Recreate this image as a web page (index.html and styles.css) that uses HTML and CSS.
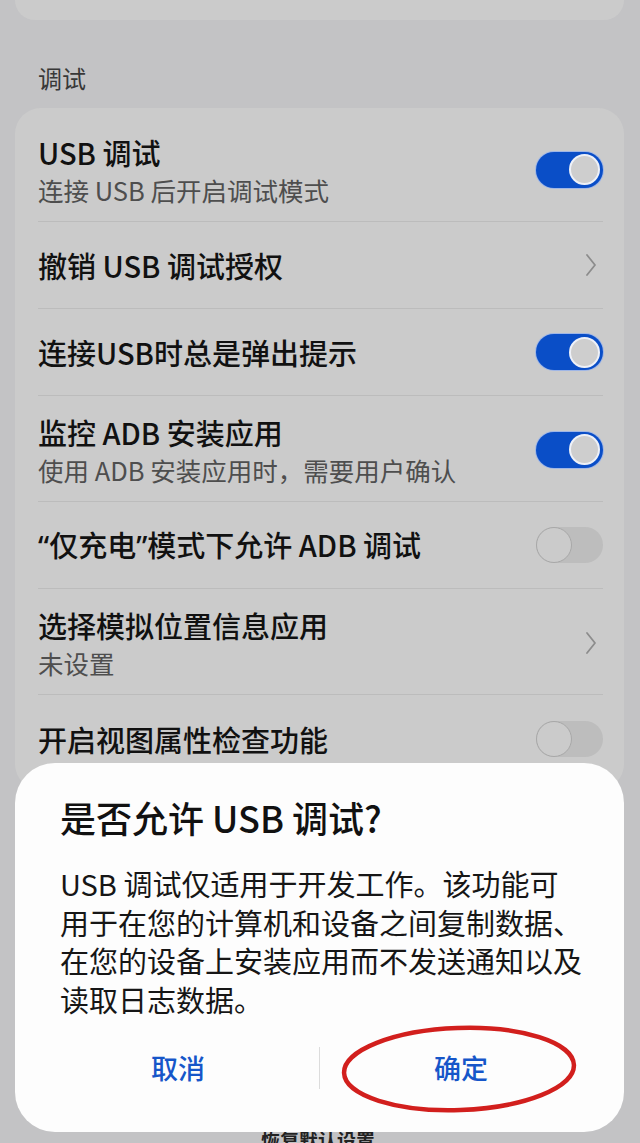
FILE: index.html
```html
<!DOCTYPE html>
<html lang="zh-CN">
<head>
<meta charset="utf-8">
<title>开发者选项</title>
<link rel="stylesheet" href="styles.css">
</head>
<body>
<div class="screen">
  <div class="card card-top"></div>
  <div class="section-label">调试</div>
  <div class="card list">
    <div class="row row-2">
      <div class="texts">
        <div class="title">USB 调试</div>
        <div class="sub">连接 USB 后开启调试模式</div>
      </div>
      <span class="toggle on"><span class="knob"></span></span>
    </div>
    <div class="row row-1">
      <div class="texts"><div class="title">撤销 USB 调试授权</div></div>
      <svg class="chev" viewBox="0 0 12 24" width="12" height="24"><polyline points="2,2 10,12 2,22" fill="none" stroke="#8c8c8c" stroke-width="1.8" stroke-linecap="round" stroke-linejoin="round"/></svg>
    </div>
    <div class="row row-1">
      <div class="texts"><div class="title">连接USB时总是弹出提示</div></div>
      <span class="toggle on"><span class="knob"></span></span>
    </div>
    <div class="row row-2">
      <div class="texts">
        <div class="title">监控 ADB 安装应用</div>
        <div class="sub">使用 ADB 安装应用时，需要用户确认</div>
      </div>
      <span class="toggle on"><span class="knob"></span></span>
    </div>
    <div class="row row-1">
      <div class="texts"><div class="title"><span class="q">“</span>仅充电<span class="q">”</span>模式下允许 ADB 调试</div></div>
      <span class="toggle off"><span class="knob"></span></span>
    </div>
    <div class="row row-2">
      <div class="texts">
        <div class="title">选择模拟位置信息应用</div>
        <div class="sub">未设置</div>
      </div>
      <svg class="chev" viewBox="0 0 12 24" width="12" height="24"><polyline points="2,2 10,12 2,22" fill="none" stroke="#8c8c8c" stroke-width="1.8" stroke-linecap="round" stroke-linejoin="round"/></svg>
    </div>
    <div class="row row-1 last">
      <div class="texts"><div class="title">开启视图属性检查功能</div></div>
      <span class="toggle off"><span class="knob"></span></span>
    </div>
  </div>
  <div class="bottom-link">恢复默认设置</div>

  <div class="sheet">
    <div class="sheet-title">是否允许 USB 调试?</div>
    <div class="sheet-body">USB 调试仅适用于开发工作。该功能可<br>用于在您的计算机和设备之间复制数据、<br>在您的设备上安装应用而不发送通知以及<br>读取日志数据。</div>
    <div class="actions">
      <div class="btn">取消</div>
      <div class="vline"></div>
      <div class="btn">确定</div>
    </div>
  </div>
  <svg class="mark" viewBox="0 0 240 94" width="240" height="94"><ellipse cx="120" cy="47" rx="115" ry="41" fill="none" stroke="#d21f1d" stroke-width="4.5"/></svg>
</div>
</body>
</html>
```
FILE: styles.css
```css
* { box-sizing: border-box; }
html, body { margin: 0; padding: 0; }
body {
  background: #c3c3c5;
  font-family: "Noto Sans CJK SC", "Noto Sans", sans-serif;
  color: #121212;
}
.screen {
  position: relative;
  width: 640px;
  height: 1143px;
  overflow: hidden;
  background: #c3c3c5;
}
.card {
  background: #cbcbcb;
  margin: 0 16px 0 15px;
}
.card-top {
  height: 20px;
  border-radius: 0 0 26px 26px;
}
.section-label {
  margin: 43px 0 15px;
  padding: 0 38px;
  font-size: 24px;
  line-height: 30px;
  color: #383838;
}
.list {
  border-radius: 26px;
  padding: 8px 21px 8px 23px;
}
.row {
  display: flex;
  align-items: center;
  justify-content: space-between;
  border-bottom: 1px solid #bcbcbc;
}
.row.last { border-bottom: none; }
.row-1 { height: 87px; }
.row-2 { height: 106px; padding-top: 2px; }
.texts { display: flex; flex-direction: column; }
.title {
  font-size: 29px;
  line-height: 36px;
  font-weight: 500;
  color: #111;
  white-space: nowrap;
}
.q { font-family: "Noto Sans", "Liberation Sans", sans-serif; }
.sub {
  font-size: 25.5px;
  line-height: 32px;
  margin-top: 4px;
  color: #4e4e4e;
  white-space: nowrap;
}
.toggle {
  position: relative;
  width: 67px;
  height: 36px;
  border-radius: 18px;
  flex: none;
  display: flex;
  align-items: center;
}
.toggle.on {
  background: #0a4ec7;
  box-shadow: 0 0 0 1px #9fb6e6;
  justify-content: flex-end;
  padding-right: 3px;
}
.toggle.on .knob {
  width: 31px;
  height: 31px;
  border-radius: 50%;
  background: #cecece;
  border: 2px solid #eef1f8;
}
.toggle.off {
  background: #bdbdbd;
  justify-content: flex-start;
}
.toggle.off .knob {
  width: 36px;
  height: 36px;
  border-radius: 50%;
  background: #cbcbcb;
  border: 1.5px solid #a8a8a8;
}
.chev { margin-right: 6px; flex: none; }
.bottom-link {
  margin-top: 338px;
  text-align: center;
  font-size: 19px;
  font-weight: 700;
  line-height: 24px;
  color: #222;
  padding-right: 4px;
}
.sheet {
  position: absolute;
  left: 15px;
  right: 16px;
  top: 763px;
  height: 369px;
  background: #fdfdfd;
  border-radius: 40px;
  padding: 0 22px;
}
.sheet-title {
  padding: 34px 23px 0;
  font-size: 36px;
  line-height: 40px;
  font-weight: 500;
  color: #111;
  white-space: nowrap;
}
.sheet-body {
  padding: 27px 0 0 23px;
  font-size: 29px;
  line-height: 38.5px;
  color: #161616;
  white-space: nowrap;
}
.actions {
  display: flex;
  align-items: center;
  height: 58px;
  margin-top: 21px;
}
.btn {
  flex: 1;
  text-align: center;
  font-size: 27px;
  font-weight: 500;
  color: #1656c9;
  line-height: 36px;
}
.vline {
  width: 1px;
  height: 42px;
  background: #dcdcdc;
}
.mark {
  position: absolute;
  left: 339px;
  top: 1022px;
  transform: rotate(-2deg);
}
```
